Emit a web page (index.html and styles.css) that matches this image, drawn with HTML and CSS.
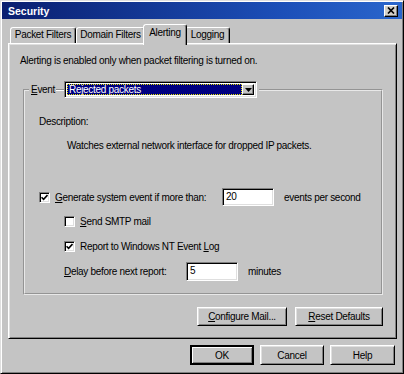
FILE: index.html
```html
<!DOCTYPE html>
<html lang="en">

<head>
    <meta charset="UTF-8">
    <meta name="viewport" content="width=device-width, initial-scale=1.0">
    <title>Security</title>
    <link rel="stylesheet" href="styles.css">
</head>

<body>
    <div class="window">
        <div class="titlebar">
            <span class="title">Security</span>
            <span class="close-btn">
                <svg width="8" height="7" viewBox="0 0 8 7">
                    <path d="M1 0.5 L7 6.5 M7 0.5 L1 6.5" stroke="#000" stroke-width="1.7" fill="none"/>
                </svg>
            </span>
        </div>

        <div class="content">
            <div class="tabs">
                <div class="tab tab-packet">Packet Filters</div>
                <div class="tab tab-domain">Domain Filters</div>
                <div class="tab tab-active">Alerting</div>
                <div class="tab tab-logging">Logging</div>
            </div>

            <div class="panel">
                <p class="note">Alerting is enabled only when packet filtering is turned on.</p>

                <fieldset class="group">
                    <legend class="group-legend">
                        <span class="legend-label"><u>E</u>vent</span>
                        <span class="legend-line"></span>
                        <span class="combo">
                            <span class="combo-value">Rejected packets</span>
                            <span class="combo-arrow">
                                <svg width="7" height="4" viewBox="0 0 7 4">
                                    <path d="M0 0 H7 L3.5 4 Z" fill="#000"/>
                                </svg>
                            </span>
                        </span>
                    </legend>

                    <p class="desc-label">Description:</p>
                    <p class="desc">Watches external network interface for dropped IP packets.</p>

                    <div class="row row-generate">
                        <span class="checkbox checked">
                            <svg width="7" height="7" viewBox="0 0 7 7">
                                <path d="M0.5 3.2 L2.6 5.4 L6.5 1" stroke="#000" stroke-width="1.6" fill="none"/>
                            </svg>
                        </span>
                        <span class="label label-generate"><u>G</u>enerate system event if more than:</span>
                        <span class="field">20</span>
                        <span class="suffix">events per second</span>
                    </div>

                    <div class="row row-smtp">
                        <span class="checkbox"></span>
                        <span class="label"><u>S</u>end SMTP mail</span>
                    </div>

                    <div class="row row-report">
                        <span class="checkbox checked">
                            <svg width="7" height="7" viewBox="0 0 7 7">
                                <path d="M0.5 3.2 L2.6 5.4 L6.5 1" stroke="#000" stroke-width="1.6" fill="none"/>
                            </svg>
                        </span>
                        <span class="label">Report to Windows NT Event <u>L</u>og</span>
                    </div>

                    <div class="row row-delay">
                        <span class="label label-delay"><u>D</u>elay before next report:</span>
                        <span class="field">5</span>
                        <span class="suffix">minutes</span>
                    </div>
                </fieldset>

                <div class="panel-buttons">
                    <span class="button btn-configure"><u>C</u>onfigure Mail...</span>
                    <span class="button btn-reset"><u>R</u>eset Defaults</span>
                </div>
            </div>

            <div class="dialog-buttons">
                <span class="button btn-default">OK</span>
                <span class="button">Cancel</span>
                <span class="button btn-help">Help</span>
            </div>
        </div>
    </div>
</body>

</html>
```

FILE: styles.css
```css
* {
    box-sizing: border-box;
}

body {
    margin: 0;
    width: 404px;
    height: 374px;
    overflow: hidden;
    background-color: #c4c4c4;
    font-family: "Liberation Sans", Arial, sans-serif;
    font-size: 10px;
    letter-spacing: -0.3px;
    color: #000;
}

.window {
    width: 404px;
    height: 374px;
    padding: 1px;
    background-color: #c4c4c4;
    border: 1px solid;
    border-color: #dfdfdf #000 #000 #dfdfdf;
    box-shadow: inset 1px 1px #fff, inset -1px -1px #808080;
}

.titlebar {
    height: 17px;
    display: flex;
    align-items: center;
    justify-content: space-between;
    padding: 0 4px 0 6px;
    background: linear-gradient(to right, #0a1f70, #1c4fb8 70%, #2a66cc);
    color: white;
}

.title {
    font-weight: bold;
    font-size: 10.5px;
    letter-spacing: 0;
}

.close-btn {
    width: 14px;
    height: 12px;
    display: flex;
    align-items: center;
    justify-content: center;
    background-color: #d4d0c8;
    border: 1px solid;
    border-color: #fff #000 #000 #fff;
    box-shadow: inset -1px -1px #808080;
}

.content {
    padding: 5px 5px 0 6px;
}

/* tabs */
.tabs {
    position: relative;
    display: flex;
    align-items: flex-end;
    height: 19px;
    padding-left: 2px;
}

.tab {
    height: 16px;
    line-height: 14px;
    text-align: center;
    white-space: nowrap;
    background-color: #c4c4c4;
    border: 1px solid;
    border-bottom: none;
    border-color: #fff #000 transparent #fff;
    border-radius: 3px 3px 0 0;
    box-shadow: inset -1px 0 #808080;
}

.tab-packet {
    width: 66px;
}

.tab-domain {
    width: 69px;
}

.tab-active {
    position: relative;
    z-index: 1;
    width: 44px;
    height: 21px;
    line-height: 16px;
    margin: 0 -2px -2px;
}

.tab-logging {
    width: 45px;
}

.panel {
    height: 296px;
    padding: 10px 13px 0 11px;
    border: 1px solid;
    border-color: #fff #000 #000 #fff;
    box-shadow: inset 1px 1px #dfdfdf, inset -1px -1px #808080;
}

.note {
    margin: 0;
    line-height: 13px;
    white-space: nowrap;
}

/* group box */
.group {
    margin: 14px 0 0 3px;
    padding: 0 10px 12px 14px;
    border: 2px groove #e8e8e8;
    min-width: 0;
}

.group-legend {
    display: flex;
    align-items: center;
    height: 17px;
    margin-left: -10px;
    padding: 0 2px;
}

.legend-label {
    width: 25px;
    white-space: nowrap;
}

.legend-line {
    width: 8px;
    height: 2px;
    border-top: 1px solid #8c8c8c;
    border-bottom: 1px solid #fff;
}

.combo {
    display: flex;
    width: 193px;
    height: 17px;
    padding: 2px;
    background-color: white;
    border: 1px solid;
    border-color: #808080 #fff #fff #808080;
    box-shadow: inset 1px 1px #000, inset -1px -1px #dfdfdf;
}

.combo-value {
    flex: 1;
    line-height: 11px;
    padding-left: 2px;
    color: white;
    background-color: #000080;
    outline: 1px dotted #e8e800;
    outline-offset: -1px;
}

.combo-arrow {
    width: 12px;
    display: flex;
    align-items: center;
    justify-content: center;
    background-color: #c4c4c4;
    border: 1px solid;
    border-color: #fff #000 #000 #fff;
    box-shadow: inset -1px -1px #808080;
}

.desc-label {
    margin: 17px 0 0;
    line-height: 13px;
}

.desc {
    margin: 11px 0 0 28px;
    line-height: 13px;
    white-space: nowrap;
}

.row {
    display: flex;
    align-items: center;
    white-space: nowrap;
}

.row-generate {
    height: 18px;
    margin-top: 36px;
}

.row-smtp {
    height: 13px;
    margin-top: 9px;
    margin-left: 25px;
}

.row-report {
    height: 13px;
    margin-top: 12px;
    margin-left: 25px;
}

.row-delay {
    height: 19px;
    margin-top: 9px;
    margin-left: 25px;
}

.checkbox {
    width: 11px;
    height: 11px;
    margin-right: 5px;
    display: flex;
    align-items: center;
    justify-content: center;
    background-color: white;
    border: 1px solid;
    border-color: #808080 #fff #fff #808080;
    box-shadow: inset 1px 1px #000, inset -1px -1px #dfdfdf;
}

.label-generate {
    width: 167px;
}

.label-delay {
    width: 122px;
}

.field {
    width: 52px;
    height: 100%;
    padding-left: 3px;
    line-height: 15px;
    background-color: white;
    border: 1px solid;
    border-color: #808080 #fff #fff #808080;
    box-shadow: inset 1px 1px #000, inset -1px -1px #dfdfdf;
}

.suffix {
    margin-left: 10px;
}

/* buttons */
.button {
    display: flex;
    align-items: center;
    justify-content: center;
    white-space: nowrap;
    background-color: #c4c4c4;
    border: 1px solid;
    border-color: #fff #000 #000 #fff;
    box-shadow: inset 1px 1px #dfdfdf, inset -1px -1px #808080;
}

.panel-buttons {
    display: flex;
    justify-content: flex-end;
    gap: 8px;
    margin-top: 12px;
}

.panel-buttons .button {
    height: 19px;
}

.btn-configure {
    width: 90px;
}

.btn-reset {
    width: 88px;
}

.dialog-buttons {
    display: flex;
    justify-content: flex-end;
    gap: 6px;
    margin: 6px 2px 0 0;
}

.dialog-buttons .button {
    width: 64px;
    height: 20px;
}

.dialog-buttons .btn-help {
    width: 65px;
}

.btn-default {
    border: 2px solid #000;
    box-shadow: inset 1px 1px #fff, inset -1px -1px #808080;
}
```
